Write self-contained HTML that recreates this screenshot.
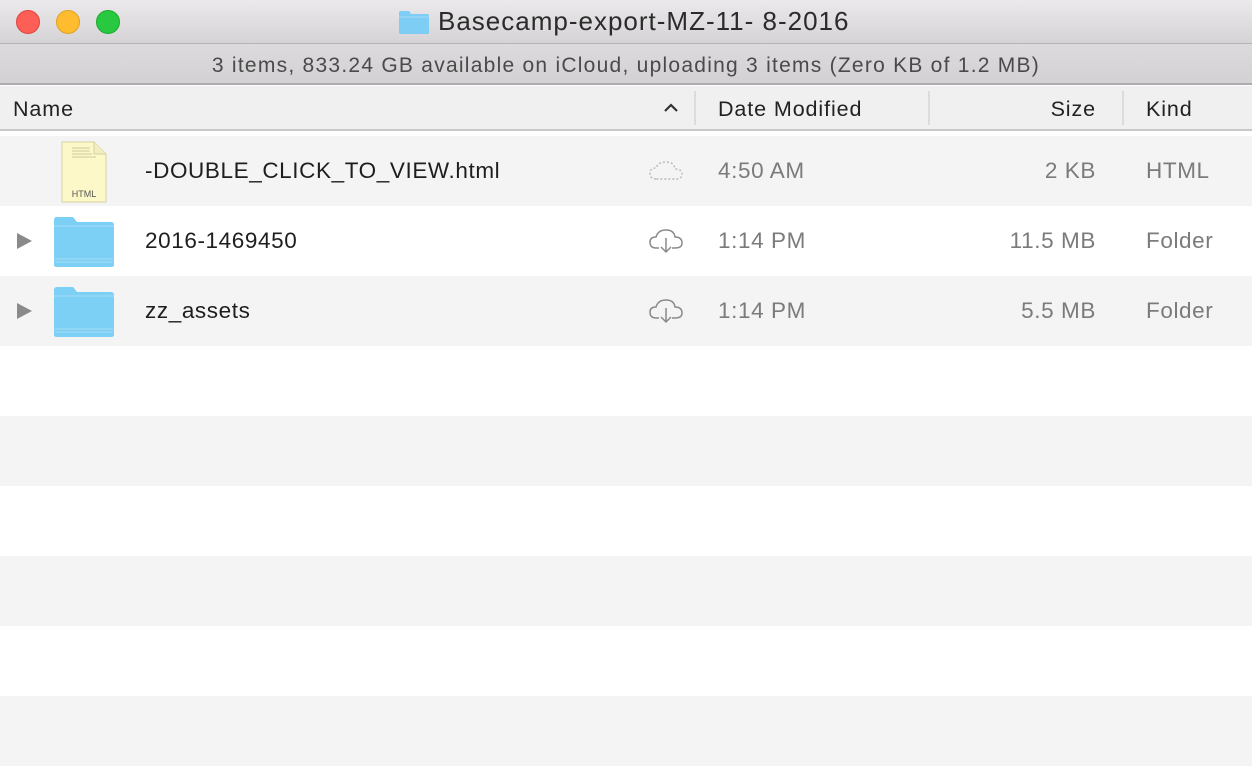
<!DOCTYPE html>
<html><head><style>
*{margin:0;padding:0;box-sizing:border-box}
body{width:1252px;height:728px;overflow:hidden;background:#fff;font-family:"Liberation Sans",Helvetica,sans-serif;position:relative}
.title{position:absolute;left:0;top:0;width:1252px;height:44px;background:linear-gradient(#ebe9eb,#d5d3d5);border-bottom:1px solid #b5b3b5}
.status{position:absolute;left:0;top:44px;width:1252px;height:41px;background:linear-gradient(#dcdadc,#d3d1d3);border-bottom:2px solid #adabad;text-align:center;font-size:21px;letter-spacing:1.25px;color:#4a4a4a;line-height:44px}
.btn{position:absolute;top:10px;width:24px;height:24px;border-radius:50%}
.hdr{position:absolute;left:0;top:86px;width:1252px;height:45px;background:#f0f0f0;border-bottom:2px solid #c8c8c8;font-size:21.5px;letter-spacing:0.9px;color:#222}
.sep{position:absolute;top:5px;width:2px;height:34px;background:#dcdcdc}
.row{position:absolute;left:0;width:1252px;height:70px}
.g{background:#f4f4f4}
.t{position:absolute;font-size:22.5px;letter-spacing:0.6px;top:22px;white-space:nowrap}
.n{left:145px;color:#1e1e1e}
.d{left:718px;color:#7b7b7b}
.s{right:156px;color:#7b7b7b}
.k{left:1146px;color:#7b7b7b}
.tri{position:absolute;left:17px;top:27px;width:0;height:0;border-left:15px solid #8a8a8a;border-top:8px solid transparent;border-bottom:8px solid transparent}
</style></head><body>
<div class="title">
<div class="btn" style="left:16px;background:#fd5f57;border:1px solid #e0443e"></div>
<div class="btn" style="left:56px;background:#febc2e;border:1px solid #dea123"></div>
<div class="btn" style="left:96px;background:#28c840;border:1px solid #1aab29"></div>
<svg style="position:absolute;left:398px;top:10px" width="32" height="25" viewBox="0 0 32 25"><path d="M1 3 Q1 1 3 1 H11 L13 4 H29 Q31 4 31 6 V23 Q31 24 29 24 H3 Q1 24 1 22Z" fill="#7dcdf5"/><path d="M1 7 H31" stroke="#a9dcf8" stroke-width="1"/></svg>
<div style="position:absolute;left:438px;top:6px;font-size:26px;letter-spacing:1px;color:#2b2b2b">Basecamp-export-MZ-11- 8-2016</div>
</div>
<div class="status">3 items, 833.24 GB available on iCloud, uploading 3 items (Zero KB of 1.2 MB)</div>
<div class="hdr">
<div style="position:absolute;left:13px;top:11px">Name</div>
<svg style="position:absolute;left:663px;top:17px" width="16" height="10"><path d="M2 8 L8 2 L14 8" stroke="#333" stroke-width="2.2" fill="none"/></svg>
<div class="sep" style="left:694px"></div>
<div style="position:absolute;left:718px;top:11px">Date Modified</div>
<div class="sep" style="left:928px"></div>
<div style="position:absolute;right:156px;top:11px">Size</div>
<div class="sep" style="left:1122px"></div>
<div style="position:absolute;left:1146px;top:11px">Kind</div>
</div>

<div class="row g" style="top:136px">
<svg style="position:absolute;left:60px;top:4px" width="48" height="64" viewBox="0 0 48 64"><path d="M2 2 H34 L46 14 V62 H2Z" fill="#fcf8c8" stroke="#d8d2a0"/><path d="M34 2 V14 H46" fill="#f3eec0" stroke="#d8d2a0"/><g stroke="#cfc9a0" stroke-width="1"><path d="M12 8H30M12 11H30M12 14H32M12 17H36"/></g><text x="24" y="57" font-size="9" font-family="Liberation Sans" fill="#555" text-anchor="middle">HTML</text></svg>
<div class="t n">-DOUBLE_CLICK_TO_VIEW.html</div>
<svg style="position:absolute;left:648px;top:24px" width="36" height="22"><path d="M8 19 Q2 19 2 13 Q2 8 8 8 Q10 2 18 2 Q26 2 27 9 Q34 9 34 14 Q34 19 28 19Z" fill="none" stroke="#b8b8b8" stroke-width="1.4" stroke-dasharray="2 2"/></svg>
<div class="t d">4:50 AM</div><div class="t s">2 KB</div><div class="t k">HTML</div>
</div>

<div class="row" style="top:206px">
<div class="tri"></div>
<svg style="position:absolute;left:53px;top:10px" width="62" height="52" viewBox="0 0 62 52"><path d="M1 4 Q1 1 4 1 H20 L24 6 H58 Q61 6 61 9 V49 Q61 51 58 51 H4 Q1 51 1 49Z" fill="#7ccff5"/><path d="M1 10 H61" stroke="#a6ddf8"/><path d="M2 43H60M2 46H60" stroke="#a8dcf5" stroke-width="1"/></svg>
<div class="t n">2016-1469450</div>
<svg style="position:absolute;left:648px;top:22px" width="36" height="26"><path d="M11 20 H8 Q2 20 2 14 Q2 9 8 9 Q10 2 18 2 Q26 2 27 9 Q34 9 34 15 Q34 20 27 20 H24" fill="none" stroke="#8a8a8a" stroke-width="1.5"/><path d="M18 10 V24 M13 19 L18 24 L23 19" fill="none" stroke="#8a8a8a" stroke-width="1.5"/></svg>
<div class="t d">1:14 PM</div><div class="t s">11.5 MB</div><div class="t k">Folder</div>
</div>

<div class="row g" style="top:276px">
<div class="tri"></div>
<svg style="position:absolute;left:53px;top:10px" width="62" height="52" viewBox="0 0 62 52"><path d="M1 4 Q1 1 4 1 H20 L24 6 H58 Q61 6 61 9 V49 Q61 51 58 51 H4 Q1 51 1 49Z" fill="#7ccff5"/><path d="M1 10 H61" stroke="#a6ddf8"/><path d="M2 43H60M2 46H60" stroke="#a8dcf5" stroke-width="1"/></svg>
<div class="t n">zz_assets</div>
<svg style="position:absolute;left:648px;top:22px" width="36" height="26"><path d="M11 20 H8 Q2 20 2 14 Q2 9 8 9 Q10 2 18 2 Q26 2 27 9 Q34 9 34 15 Q34 20 27 20 H24" fill="none" stroke="#8a8a8a" stroke-width="1.5"/><path d="M18 10 V24 M13 19 L18 24 L23 19" fill="none" stroke="#8a8a8a" stroke-width="1.5"/></svg>
<div class="t d">1:14 PM</div><div class="t s">5.5 MB</div><div class="t k">Folder</div>
</div>

<div class="row g" style="top:416px"></div>
<div class="row g" style="top:556px"></div>
<div class="row g" style="top:696px"></div>
</body></html>
